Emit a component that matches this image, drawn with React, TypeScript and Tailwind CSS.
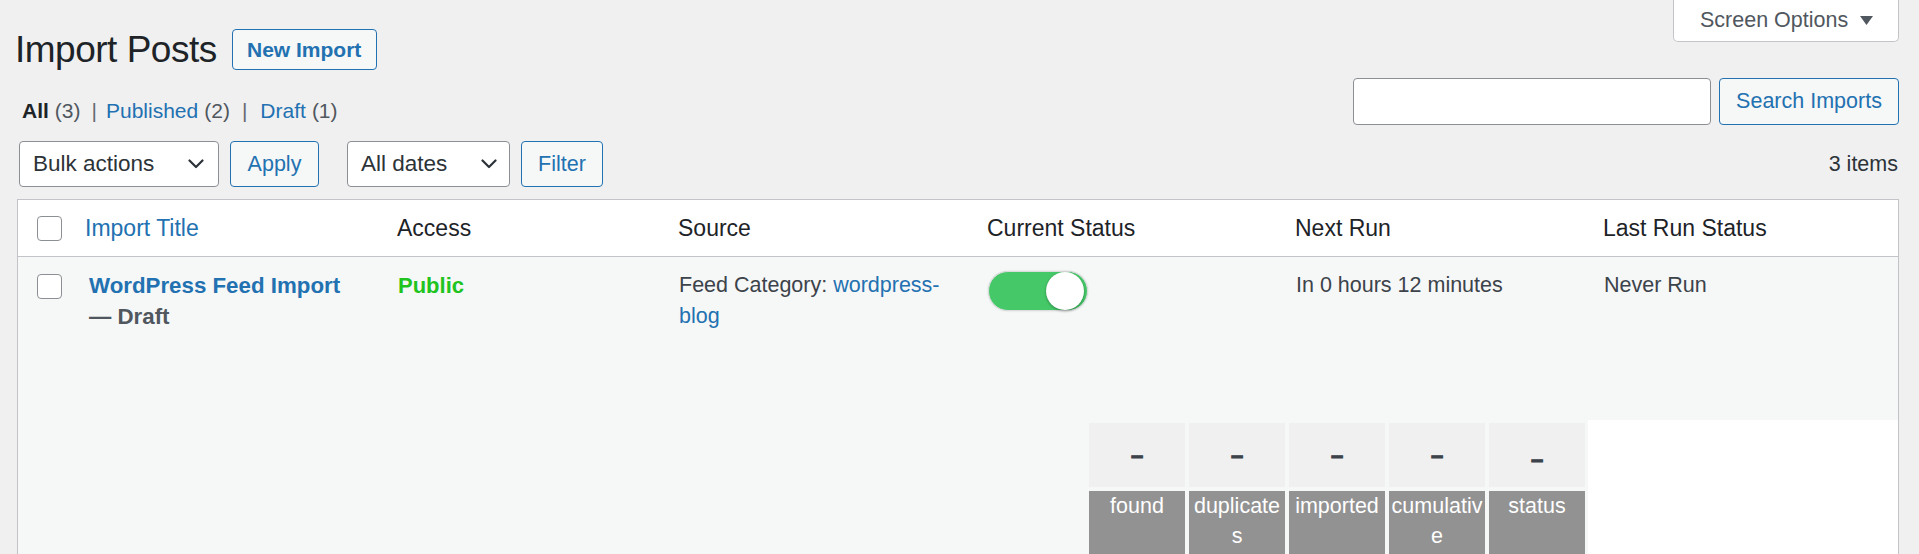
import React from "react";

function Chevron() {
  return (
    <svg width="16" height="10" viewBox="0 0 16 10" className="shrink-0">
      <path d="M1.5 1.5 L8 8 L14.5 1.5" fill="none" stroke="#2c3338" strokeWidth="2.2" strokeLinecap="round" strokeLinejoin="round" />
    </svg>
  );
}

function Checkbox() {
  return <div className="w-[25px] h-[25px] rounded-[4px] border-[1.5px] border-[#8c8f94] bg-white shrink-0" />;
}

const cols = "grid grid-cols-[58px_312px_281px_309px_308px_309px_1fr]";

export default function App() {
  return (
    <div className="h-[554px] overflow-hidden bg-[#f0f0f1] font-['Liberation_Sans',Arial,sans-serif] text-[#3c434a] pl-[17px] pr-[20px]">
      {/* Top area */}
      <div className="flex justify-between items-start">
        <div className="flex flex-col">
          <div className="flex items-center mt-[29px] h-[41px]">
            <h1 className="ml-[-2px] text-[37px] leading-[37px] tracking-[-0.5px] text-[#1d2327] font-normal">Import Posts</h1>
            <a className="ml-[15px] w-[145px] h-[41px] flex items-center justify-center border border-[#2271b1] rounded-[4px] bg-[#f6f7f7] text-[#2271b1] font-bold text-[21px]">
              New Import
            </a>
          </div>
          <div className="mt-[26px] h-[30px] flex items-center ml-[5px] text-[21px] text-[#50575e]">
            <span className="font-bold text-[#1d2327]">All</span>
            <span className="ml-[6px]">(3)</span>
            <span className="ml-[11px] mr-[9px] text-[#646970]">|</span>
            <span className="text-[#2271b1]">Published</span>
            <span className="ml-[6px]">(2)</span>
            <span className="ml-[12px] mr-[13px] text-[#646970]">|</span>
            <span className="text-[#2271b1]">Draft</span>
            <span className="ml-[6px]">(1)</span>
          </div>
        </div>
        <div className="flex flex-col items-end">
          <div className="w-[226px] h-[42px] flex items-center justify-between pl-[26px] pr-[25px] bg-white border border-t-0 border-[#c3c4c7] rounded-b-[5px] text-[21.5px] text-[#50575e]">
            <span>Screen Options</span>
            <svg width="13" height="9" viewBox="0 0 13 9">
              <polygon points="0,0 13,0 6.5,9" fill="#50575e" />
            </svg>
          </div>
          <div className="mt-[36px] flex items-center gap-[8px]">
            <div className="w-[358px] h-[47px] bg-white border border-[#8c8f94] rounded-[4px]" />
            <button className="w-[180px] h-[47px] flex items-center justify-center bg-[#f6f7f7] border border-[#2271b1] rounded-[4px] text-[#2271b1] text-[21.5px]">
              Search Imports
            </button>
          </div>
        </div>
      </div>

      {/* Toolbar */}
      <div className="mt-[15px] h-[46px] flex items-center">
        <div className="ml-[2px] w-[200px] h-[46px] flex items-center justify-between pl-[13px] pr-[14px] bg-white border border-[#8c8f94] rounded-[4px] text-[22.5px] text-[#2c3338]">
          <span>Bulk actions</span>
          <Chevron />
        </div>
        <button className="ml-[11px] w-[89px] h-[46px] flex items-center justify-center bg-[#f6f7f7] border border-[#2271b1] rounded-[4px] text-[#2271b1] text-[21.5px]">
          Apply
        </button>
        <div className="ml-[28px] w-[163px] h-[46px] flex items-center justify-between pl-[13px] pr-[12px] bg-white border border-[#8c8f94] rounded-[4px] text-[22.5px] text-[#2c3338]">
          <span>All dates</span>
          <Chevron />
        </div>
        <button className="ml-[11px] w-[82px] h-[46px] flex items-center justify-center bg-[#f6f7f7] border border-[#2271b1] rounded-[4px] text-[#2271b1] text-[21.5px]">
          Filter
        </button>
        <span className="ml-auto mr-[1px] text-[21.5px] text-[#2c3338]">3 items</span>
      </div>

      {/* Table */}
      <div className="mt-[12px] border border-[#c3c4c7] bg-white shadow-[0_1px_1px_rgba(0,0,0,0.04)]">
        <div className={`${cols} h-[57px] items-center border-b border-[#c3c4c7] text-[23px] text-[#1d2327]`}>
          <div className="pl-[19px]"><Checkbox /></div>
          <div className="pl-[9px] text-[#2271b1]">Import Title</div>
          <div className="pl-[9px]">Access</div>
          <div className="pl-[9px]">Source</div>
          <div className="pl-[9px]">Current Status</div>
          <div className="pl-[9px]">Next Run</div>
          <div className="pl-[8px]">Last Run Status</div>
        </div>
        <div className={`${cols} h-[163px] bg-[#f6f7f7] pt-[13px] text-[21.5px] leading-[31px]`}>
          <div className="pl-[19px] pt-[4px]"><Checkbox /></div>
          <div className="pl-[13px] font-bold text-[22.3px]">
            <div className="text-[#2271b1]">WordPress Feed Import</div>
            <div className="text-[#50575e]">— Draft</div>
          </div>
          <div className="pl-[10px] font-bold text-[22px] text-[#1fc41f]">Public</div>
          <div className="pl-[10px] pr-[20px]">
            <p>
              <span>Feed Category: </span>
              <span className="text-[#2271b1]">wordpress-</span>
              <span className="text-[#2271b1]">blog</span>
            </p>
          </div>
          <div className="pl-[10px] pt-[1px]">
            <div className="relative w-[100px] h-[40px] rounded-full bg-[#45c968] border border-[#dcdcde] shadow-[0_0_2px_rgba(0,0,0,0.15)]">
              <div className="absolute right-[3px] top-[0px] w-[38px] h-[38px] rounded-full bg-white shadow-[0_1px_3px_rgba(0,0,0,0.35)]" />
            </div>
          </div>
          <div className="pl-[10px]">In 0 hours 12 minutes</div>
          <div className="pl-[9px]">Never Run</div>
        </div>
        <div className="flex h-[140px]">
          <div className="w-[1068px] bg-[#f6f7f7]" />
          <div className="bg-[#f6f7f7] p-[3px] grid grid-cols-[repeat(5,96px)] gap-[4px] content-start">
            {["–", "–", "–", "–", "–"].map((d, i) => (
              <div key={"v" + i} className="h-[64px] bg-[#f0f0f0] flex items-center justify-center text-[22px] font-bold text-[#3c434a] [-webkit-text-stroke:1px_#3c434a]">
                <span className={i === 4 ? "relative top-[4px]" : ""}>{d}</span>
              </div>
            ))}
            {["found", "duplicates", "imported", "cumulative", "status"].map((l) => (
              <div key={l} className="h-[64px] bg-[#929292] px-[2px] text-center text-white text-[21.5px] leading-[30px] break-all">
                {l}
              </div>
            ))}
          </div>
          <div className="flex-1 bg-white" />
        </div>
      </div>
    </div>
  );
}
